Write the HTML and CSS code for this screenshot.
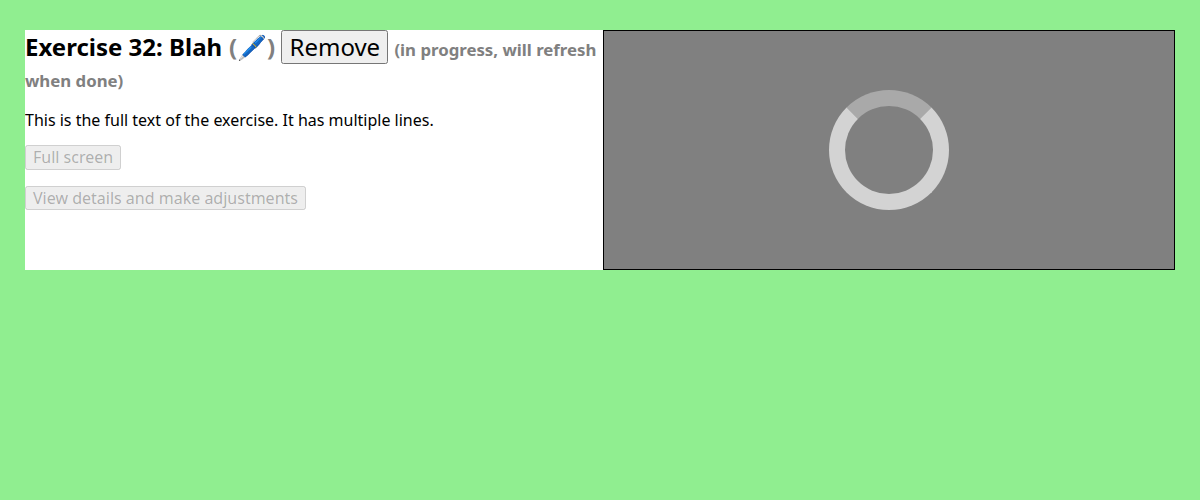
FILE: index.html
```html
<!DOCTYPE html>
<html lang="en">
<head>
<meta charset="utf-8">
<title>Exercise 32</title>
<link rel="stylesheet" href="styles.css">
</head>
<body>
<main class="exercise">
<section class="details">
<h2>Exercise 32: Blah <span class="muted kind">(🖊️)</span> <button class="remove">Remove</button> <span class="muted status">(in progress, will refresh when done)</span></h2>
<p>This is the full text of the exercise. It has multiple lines.</p>
<p><button disabled>Full screen</button></p>
<p><button disabled>View details and make adjustments</button></p>
</section>
<section class="preview"><div class="spinner"></div></section>
</main>
</body>
</html>
```

FILE: styles.css
```css
* { box-sizing: border-box; }
body { margin: 30px 25px; background: lightgreen; font: 16px/1.15 "Noto Sans", sans-serif; }
.exercise { display: grid; grid-template-columns: 578px 572px; height: 240px; background: white; }
h2 { margin: 0 0 0.83em; font-size: 24px; }
p { margin: 0 0 16px; }
button { margin: 0; font: inherit; line-height: 1.15; }
.remove { font-weight: 400; }
.muted { color: gray; }
.kind { margin-left: 0.6px; }
.status { font-size: 0.7em; }
.preview { display: flex; justify-content: center; padding-top: 59px; border: 1px solid black; background: gray; }
.spinner { width: 120px; height: 120px; border: 16px solid lightgray; border-top-color: darkgray; border-radius: 50%; }
```
